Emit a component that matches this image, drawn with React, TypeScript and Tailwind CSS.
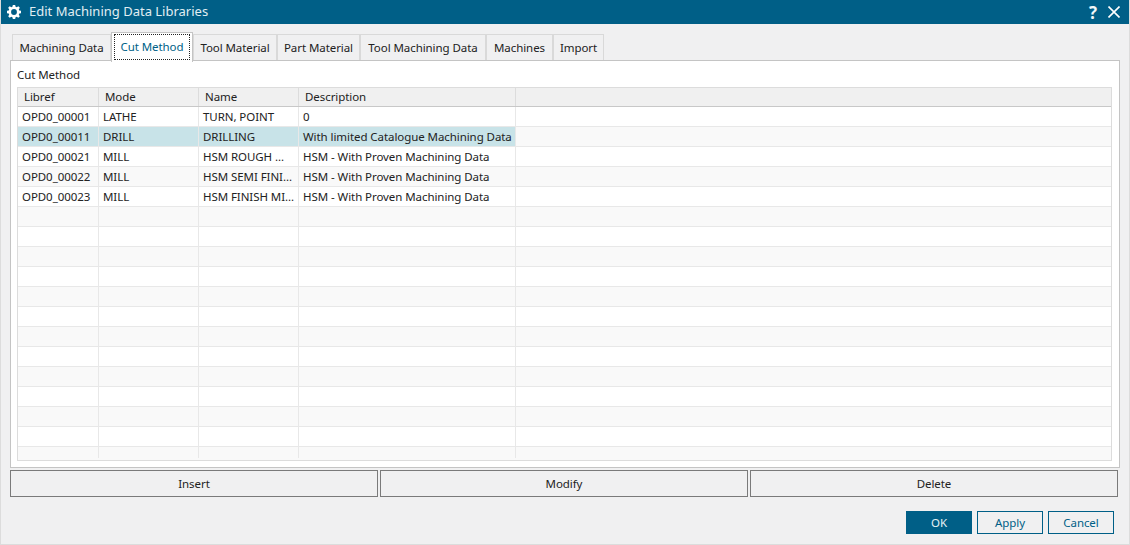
const tabs = [
  { t: "Machining Data", w: "w-[99px]" },
  { t: "Cut Method", w: "w-[82px]", active: true },
  { t: "Tool Material", w: "w-[84px]" },
  { t: "Part Material", w: "w-[83px]" },
  { t: "Tool Machining Data", w: "w-[126px]" },
  { t: "Machines", w: "w-[67px]" },
  { t: "Import", w: "w-[51px]" },
];
const data = [
  ["OPD0_00001", "LATHE", "TURN, POINT", "0"],
  ["OPD0_00011", "DRILL", "DRILLING", "With limited Catalogue Machining Data"],
  ["OPD0_00021", "MILL", "HSM ROUGH ...", "HSM - With Proven Machining Data"],
  ["OPD0_00022", "MILL", "HSM SEMI FINI...", "HSM - With Proven Machining Data"],
  ["OPD0_00023", "MILL", "HSM FINISH MI...", "HSM - With Proven Machining Data"],
];
const rows = Array.from({ length: 18 }, (_, i) => data[i] ?? ["", "", "", ""]);

function Row({ r, i }: { r: string[]; i: number }) {
  const sel = i === 1;
  const last = i === 17;
  const bg = i % 2 === 1 ? "bg-[#f9f9f9]" : "bg-white";
  const cell = `border-r border-[#e8e8e8] pl-[4px] overflow-hidden whitespace-nowrap leading-[19px] ${last ? "h-[11px]" : "h-full"} ${sel ? "bg-[#c8e3e8]" : ""}`;
  return (
    <div className={`flex shrink-0 ${last ? "h-[13px]" : "h-[20px] border-b border-[#e8e8e8]"} ${bg}`}>
      <div className={`w-[81px] ${cell}`}>{r[0]}</div>
      <div className={`w-[100px] ${cell}`}>{r[1]}</div>
      <div className={`w-[100px] ${cell}`}>{r[2]}</div>
      <div className={`w-[217px] ${cell}`}>{r[3]}</div>
    </div>
  );
}

export default function App() {
  return (
    <div className="w-[1130px] h-[545px] bg-[#f0f0f1] text-[11.5px] tracking-[-0.07px] text-[#222222] flex flex-col overflow-hidden border-l border-b border-r border-[#dcdcdc] font-['Noto_Sans','Open_Sans',sans-serif]">
      <div className="-mx-px h-[24px] shrink-0 bg-[#005f87] text-[#e0eef3] flex items-center pl-[7px] pr-[10px]">
        <svg width="14" height="14" viewBox="0 0 24 24" fill="#ffffff" fillRule="evenodd">
          <path d="M10 0h4l.7 3.200 1.900.8L19.400 2.200 22 4.800l-1.800 2.800.8 1.900L24 10v4l-3 .6-.8 1.900L22 19.200 19.400 21.800l-2.800-1.800-1.900.8L14 24h-4l-.7-3.200-1.900-.8-2.800 1.800L2 19.200l1.800-2.700-.8-1.900L0 14v-4l3-.5.8-1.900L2 4.800 4.600 2.200 7.400 4l1.900-.8zM12 7a5 5 0 1 0 0 10 5 5 0 0 0 0-10z" />
        </svg>
        <span className="ml-[8px] text-[13px] tracking-[0px]">Edit Machining Data Libraries</span>
        <span className="ml-auto text-[17px] font-bold text-[#f2f7f9] leading-none font-['Open_Sans',sans-serif]">?</span>
        <svg className="ml-[11px]" width="12" height="12" viewBox="0 0 12 12" stroke="#ffffff" strokeWidth="1.6" fill="none">
          <path d="M0.500 0.500L11.500 11.500M11.500 0.500L0.500 11.500" />
        </svg>
      </div>

      <div className="flex items-end h-[36px] shrink-0 pl-[11px]">
        {tabs.map((t) =>
          t.active ? (
            <div key={t.t} className={`${t.w} h-[30px] -mb-[2px] z-10 bg-white border border-[#c4c4c4] border-b-0 px-[2px] pt-[1px] pb-[2px]`}>
              <div className="h-full border border-dotted border-[#222222] text-[#005f87] flex items-center justify-center">{t.t}</div>
            </div>
          ) : (
            <div key={t.t} className={`${t.w} h-[26px] pt-[1px] bg-[#f0f0f1] border border-[#d9d9d9] border-b-0 flex items-center justify-center`}>{t.t}</div>
          )
        )}
      </div>

      <div className="mx-[9px] h-[408px] shrink-0 bg-white border border-[#c4c4c4] pt-[6px] pl-[6px] pr-[7px] flex flex-col">
        <div className="h-[20px] leading-[15px]">Cut Method</div>
        <div className="h-[374px] border border-[#dcdcdc] flex flex-col overflow-hidden">
          <div className="h-[19px] shrink-0 flex bg-[#f0f0f0] border-b border-[#c8c8c8]">
            {[["w-[81px]", "Libref"], ["w-[100px]", "Mode"], ["w-[100px]", "Name"], ["w-[217px]", "Description"]].map(([w, t]) => (
              <div key={t} className={`${w} border-r border-[#dcdcdc] pl-[6px] leading-[18px]`}>{t}</div>
            ))}
          </div>
          {rows.map((r, i) => (
            <Row key={i} r={r} i={i} />
          ))}
        </div>
      </div>

      <div className="ml-[9px] mr-[11px] mt-[2px] flex gap-[2px] shrink-0">
        {["Insert", "Modify", "Delete"].map((t) => (
          <div key={t} className="flex-1 h-[27px] border border-[#7a7a7a] flex items-center justify-center">{t}</div>
        ))}
      </div>

      <div className="mt-[14px] pr-[15px] flex justify-end gap-[5px] shrink-0">
        <div className="w-[66px] h-[23px] bg-[#005f87] text-[#e6f1f5] flex items-center justify-center">OK</div>
        <div className="w-[66px] h-[23px] border border-[#005f87] text-[#005f87] flex items-center justify-center">Apply</div>
        <div className="w-[66px] h-[23px] border border-[#005f87] text-[#005f87] flex items-center justify-center">Cancel</div>
      </div>
    </div>
  );
}
